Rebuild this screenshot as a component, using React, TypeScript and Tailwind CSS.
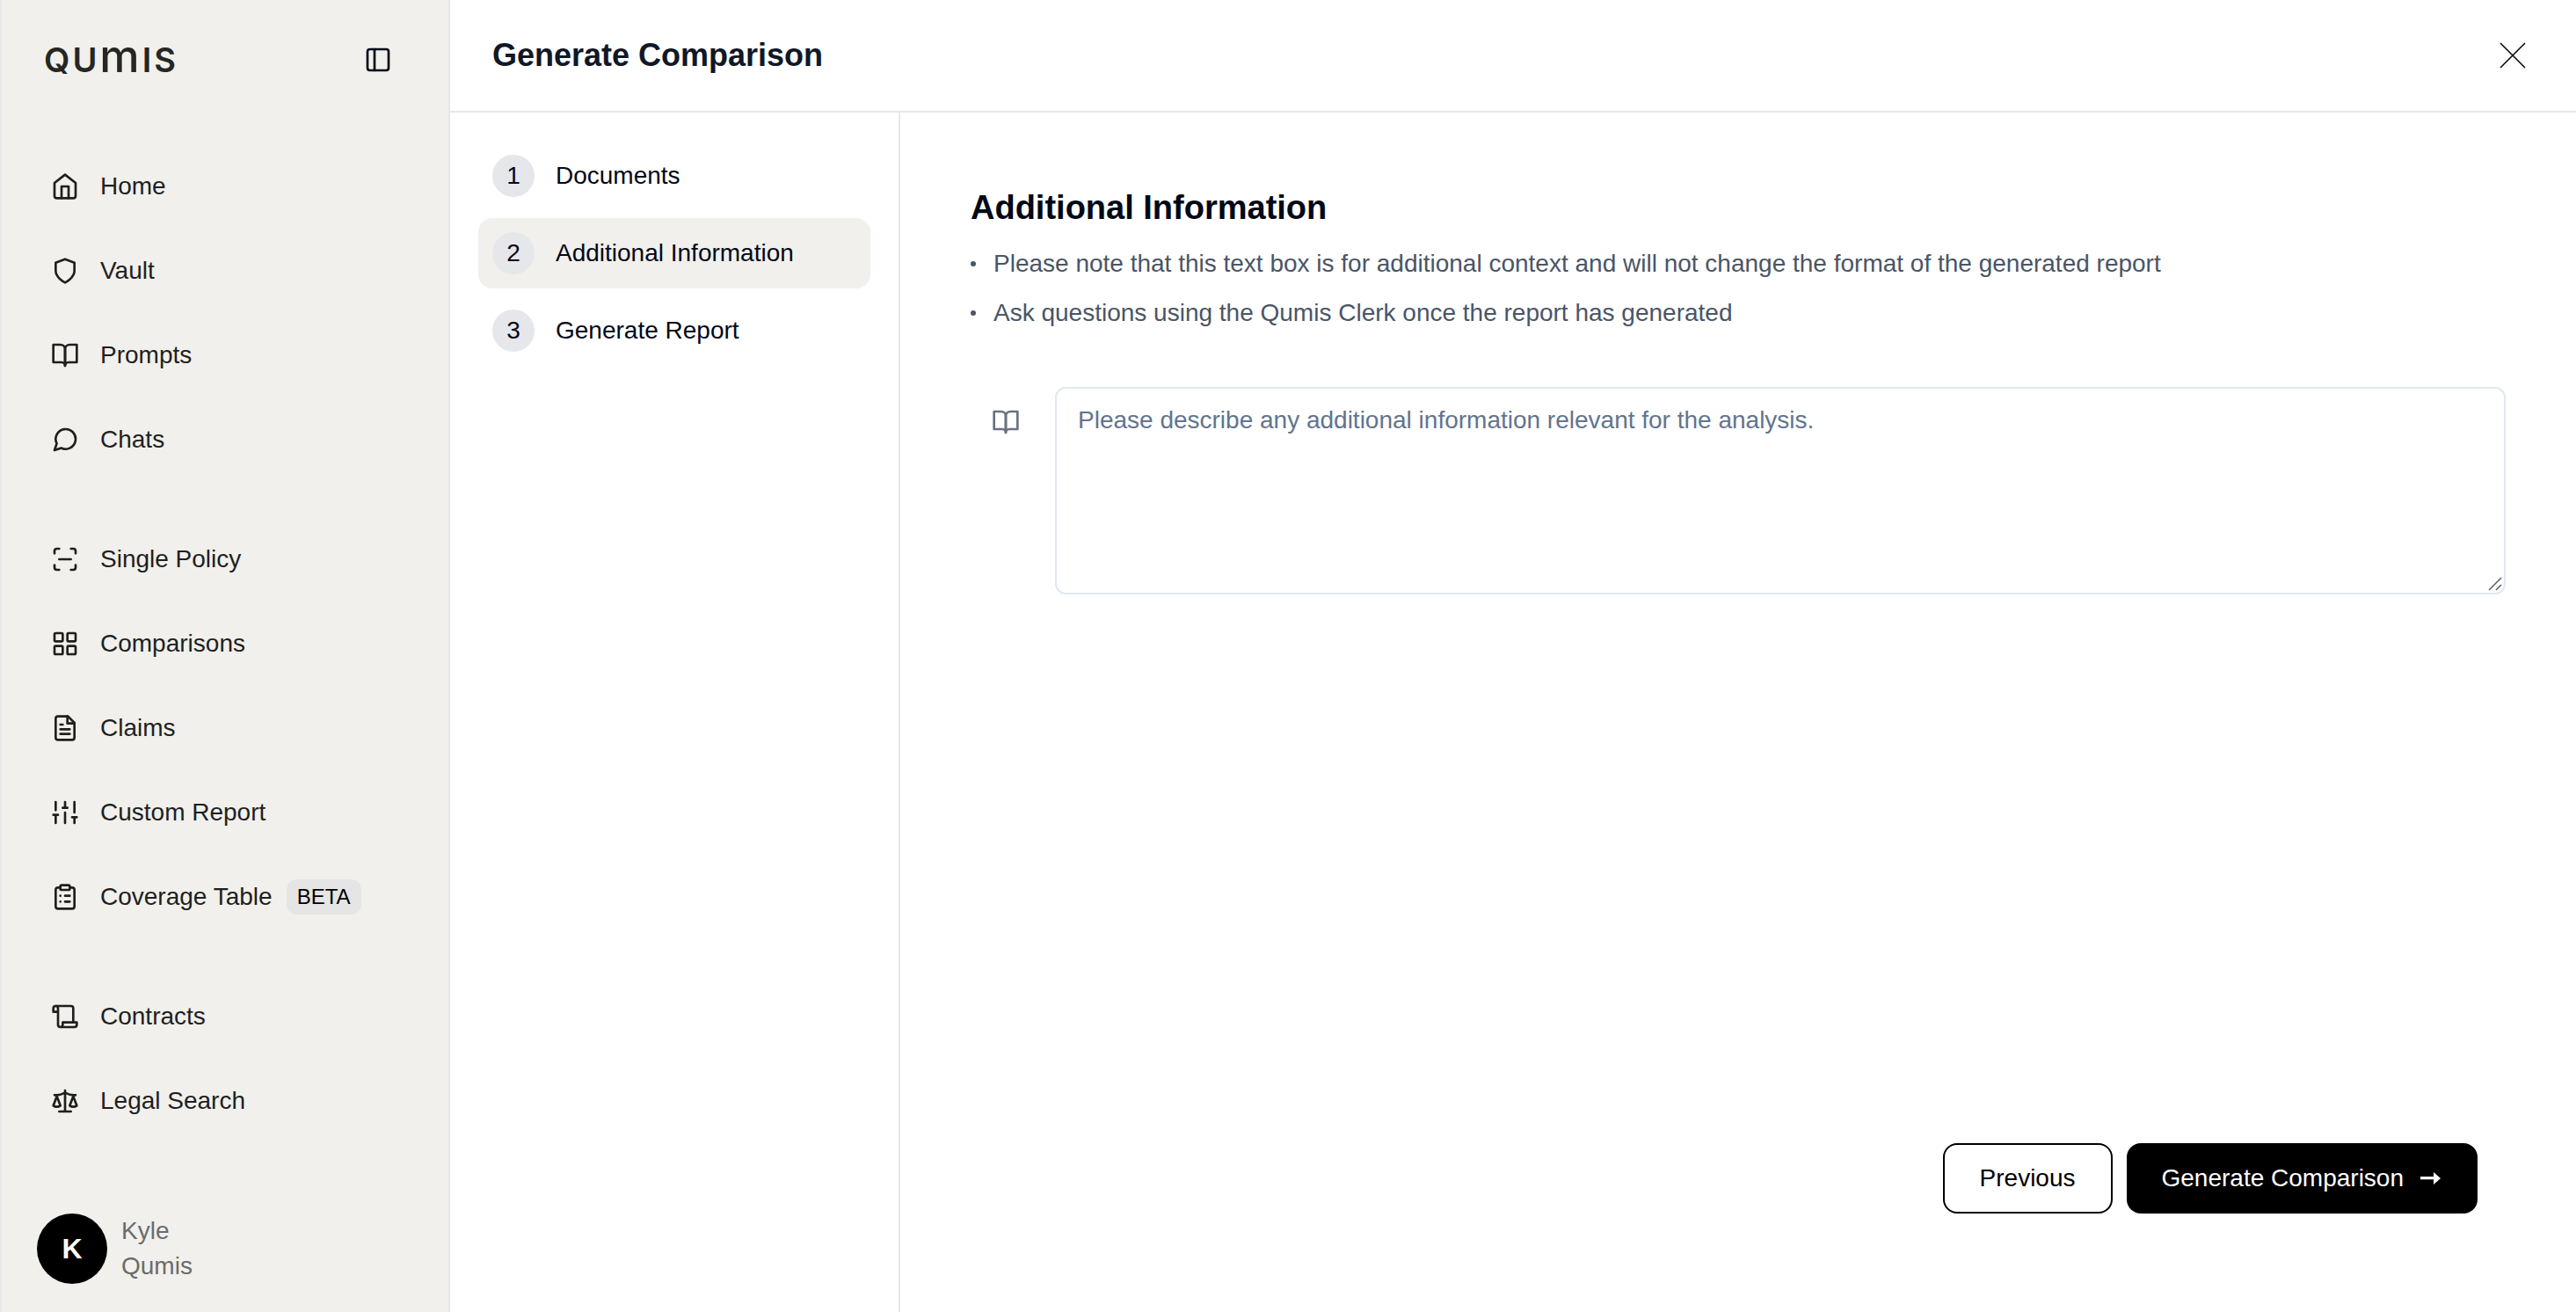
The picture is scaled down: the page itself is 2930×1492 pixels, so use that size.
import type { ReactNode } from "react";

type IconProps = { children: ReactNode; className?: string };

function Icon({ children, className = "" }: IconProps) {
  return (
    <svg
      viewBox="0 0 24 24"
      fill="none"
      stroke="currentColor"
      strokeWidth={2}
      strokeLinecap="round"
      strokeLinejoin="round"
      aria-hidden="true"
      className={`size-8 shrink-0 ${className}`}
    >
      {children}
    </svg>
  );
}

const bookShape = (
  <>
    <path d="M2 3h6a4 4 0 0 1 4 4v14a3 3 0 0 0-3-3H2z" />
    <path d="M22 3h-6a4 4 0 0 0-4 4v14a3 3 0 0 1 3-3h7z" />
  </>
);

type NavItem = { label: string; icon: ReactNode; badge?: string };

const navGroups: NavItem[][] = [
  [
    {
      label: "Home",
      icon: (
        <>
          <path d="m3 9 9-7 9 7v11a2 2 0 0 1-2 2H5a2 2 0 0 1-2-2z" />
          <path d="M9 22V12h6v10" />
        </>
      ),
    },
    {
      label: "Vault",
      icon: <path d="M12 22s8-4 8-10V5l-8-3-8 3v7c0 6 8 10 8 10" />,
    },
    { label: "Prompts", icon: bookShape },
    { label: "Chats", icon: <path d="m3 21 1.9-5.7a8.5 8.5 0 1 1 3.8 3.8z" /> },
  ],
  [
    {
      label: "Single Policy",
      icon: (
        <path d="M3 7V5a2 2 0 0 1 2-2h2M17 3h2a2 2 0 0 1 2 2v2M21 17v2a2 2 0 0 1-2 2h-2M7 21H5a2 2 0 0 1-2-2v-2M7 12h10" />
      ),
    },
    {
      label: "Comparisons",
      icon: (
        <>
          <rect x="3" y="3" width="7" height="7" rx="1" />
          <rect x="14" y="3" width="7" height="7" rx="1" />
          <rect x="14" y="14" width="7" height="7" rx="1" />
          <rect x="3" y="14" width="7" height="7" rx="1" />
        </>
      ),
    },
    {
      label: "Claims",
      icon: (
        <>
          <path d="M14.5 2H6a2 2 0 0 0-2 2v16a2 2 0 0 0 2 2h12a2 2 0 0 0 2-2V7.5L14.5 2z" />
          <path d="M14 2v6h6M16 13H8M16 17H8M10 9H8" />
        </>
      ),
    },
    {
      label: "Custom Report",
      icon: (
        <path d="M4 21v-7M4 10V3M12 21v-9M12 8V3M20 21v-5M20 12V3M2 14h4M10 8h4M18 16h4" />
      ),
    },
    {
      label: "Coverage Table",
      badge: "BETA",
      icon: (
        <>
          <rect x="8" y="2" width="8" height="4" rx="1" />
          <path d="M16 4h2a2 2 0 0 1 2 2v14a2 2 0 0 1-2 2H6a2 2 0 0 1-2-2V6a2 2 0 0 1 2-2h2" />
          <path d="M12 11h4M12 16h4M8 11h.01M8 16h.01" />
        </>
      ),
    },
  ],
  [
    {
      label: "Contracts",
      icon: (
        <>
          <path d="M8 21h12a2 2 0 0 0 2-2v-2H10v2a2 2 0 1 1-4 0V5a2 2 0 1 0-4 0v3h4" />
          <path d="M19 17V5a2 2 0 0 0-2-2H4" />
        </>
      ),
    },
    {
      label: "Legal Search",
      icon: (
        <>
          <path d="m16 16 3-8 3 8c-.87.65-1.92 1-3 1s-2.13-.35-3-1Z" />
          <path d="m2 16 3-8 3 8c-.87.65-1.92 1-3 1s-2.13-.35-3-1Z" />
          <path d="M7 21h10M12 3v18M3 7h2c2 0 5-1 7-2 2 1 5 2 7 2h2" />
        </>
      ),
    },
  ],
];

function Wordmark() {
  return (
    <a
      href="#"
      aria-label="Qumis"
      className="flex items-baseline gap-[3px] pb-1 font-['Inter',sans-serif] text-[38px] leading-10 font-semibold text-[#262624]"
    >
      <span>Q</span>
      <span>U</span>
      <span className="text-[51px] font-medium">m</span>
      <span>I</span>
      <span>S</span>
    </a>
  );
}

function Sidebar() {
  return (
    <aside className="flex w-[512px] shrink-0 flex-col border-x-2 border-gray-200 bg-[#f1f0ec] text-[#1f1f1f]">
      <div className="flex h-[136px] items-center justify-between pr-16 pl-12">
        <Wordmark />
        <button type="button" aria-label="Toggle sidebar" className="text-[#020817]">
          <Icon>
            <rect x="3" y="3" width="18" height="18" rx="2" />
            <path d="M9 3v18" />
          </Icon>
        </button>
      </div>
      <nav className="flex flex-col gap-10 pt-7">
        {navGroups.map((group, index) => (
          <ul key={index}>
            {group.map((item) => (
              <li key={item.label}>
                <a href="#" className="flex h-24 items-center gap-6 pl-14">
                  <Icon>{item.icon}</Icon>
                  <span className="flex items-center gap-4">
                    {item.label}
                    {item.badge && (
                      <span className="rounded-xl bg-[#e5e5e5] px-3 text-2xl leading-10 text-black">
                        {item.badge}
                      </span>
                    )}
                  </span>
                </a>
              </li>
            ))}
          </ul>
        ))}
      </nav>
      <div className="mt-auto flex items-center gap-4 pb-8 pl-10">
        <span className="flex size-20 items-center justify-center rounded-full bg-black text-[32px] font-bold text-white">
          K
        </span>
        <p className="text-[#6b6b6b]">
          Kyle
          <br />
          Qumis
        </p>
      </div>
    </aside>
  );
}

const steps = ["Documents", "Additional Information", "Generate Report"];

function Steps() {
  return (
    <ol className="flex w-[512px] shrink-0 flex-col gap-2 border-r-2 border-gray-200 p-8">
      {steps.map((step, index) => (
        <li key={step}>
          <button
            type="button"
            aria-current={index === 1 ? "step" : undefined}
            className={`flex h-20 w-full items-center gap-6 rounded-2xl px-4 ${index === 1 ? "bg-[#f1f0ec]" : ""}`}
          >
            <span className="flex size-12 items-center justify-center rounded-full bg-gray-200">
              {index + 1}
            </span>
            {step}
          </button>
        </li>
      ))}
    </ol>
  );
}

const notes = [
  "Please note that this text box is for additional context and will not change the format of the generated report",
  "Ask questions using the Qumis Clerk once the report has generated",
];

function AdditionalInformation() {
  return (
    <section className="flex grow flex-col px-20 pt-20 pb-28">
      <h2 className="text-[38px] leading-14 font-bold">Additional Information</h2>
      <ul className="mt-4 flex flex-col gap-4 text-gray-600">
        {notes.map((note) => (
          <li key={note} className="flex items-center gap-5">
            <span className="size-1.5 shrink-0 rounded-full bg-current" />
            {note}
          </li>
        ))}
      </ul>
      <div className="mt-16 flex items-start gap-10 pl-6">
        <label htmlFor="details" aria-label="Additional information" className="pt-6 text-gray-500">
          <Icon>{bookShape}</Icon>
        </label>
        <div className="relative grow">
          <textarea
            id="details"
            placeholder="Please describe any additional information relevant for the analysis."
            className="block h-[236px] w-full resize-none rounded-xl border-2 border-slate-200 px-6 py-4 placeholder:text-slate-500"
          />
          <svg
            viewBox="0 0 16 16"
            stroke="#5f5f5f"
            strokeWidth="1.5"
            aria-hidden="true"
            className="absolute right-1 bottom-1 size-4"
          >
            <path d="M1 15 15 1M9 15l6-6" />
          </svg>
        </div>
      </div>
      <div className="mt-auto flex justify-end gap-4 pr-8">
        <button type="button" className="h-20 rounded-2xl border-2 border-black px-10 text-black">
          Previous
        </button>
        <button
          type="button"
          className="flex h-20 items-center gap-[18px] rounded-2xl bg-black pr-[42px] pl-10 text-white"
        >
          Generate Comparison
          <svg viewBox="0 0 24 16" fill="currentColor" aria-hidden="true" className="h-4 w-6">
            <path d="M1 6h15V1l8 7-8 7V9.200H1z" />
          </svg>
        </button>
      </div>
    </section>
  );
}

export default function App() {
  return (
    <div className="flex min-h-screen bg-white font-['Liberation_Sans',Arial,sans-serif] text-[28px] leading-10 text-[#020817]">
      <Sidebar />
      <main className="flex grow flex-col">
        <header className="flex h-32 items-center justify-between border-b-2 border-gray-200 pr-14 pl-12">
          <h1 className="text-4xl font-bold text-gray-900">Generate Comparison</h1>
          <button type="button" aria-label="Close" className="text-black">
            <svg
              viewBox="0 0 32 32"
              stroke="currentColor"
              strokeWidth="1.500"
              aria-hidden="true"
              className="size-8"
            >
              <path d="m2 2 28 28M30 2 2 30" />
            </svg>
          </button>
        </header>
        <div className="flex grow">
          <Steps />
          <AdditionalInformation />
        </div>
      </main>
    </div>
  );
}
